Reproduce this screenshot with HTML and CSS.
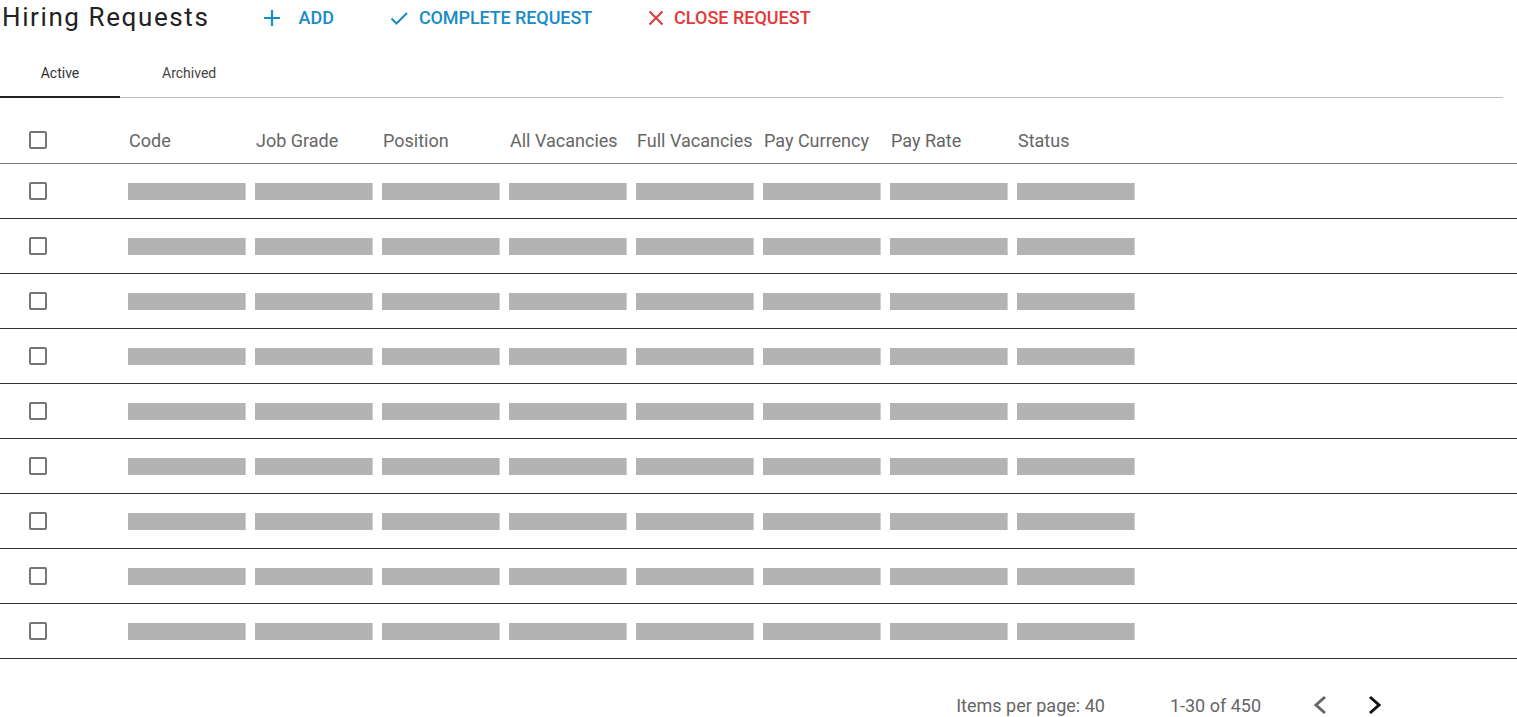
FILE: index.html
```html
<!DOCTYPE html>
<html lang="en">
<head>
<meta charset="utf-8">
<title>Hiring Requests</title>
<link rel="stylesheet" href="styles.css">
</head>
<body>
<header class="toolbar">
  <h1 class="title">Hiring Requests</h1>
  <button class="action action-blue action-add">
    <svg class="icon" width="18" height="18" viewBox="0 0 18 18"><path d="M9 1v16M1 9h16" stroke="currentColor" stroke-width="2.2" fill="none"/></svg>
    <span>ADD</span>
  </button>
  <button class="action action-blue action-complete">
    <svg class="icon" width="18" height="18" viewBox="0 0 18 18"><path d="M1.5 9.5l5 5L17 4" stroke="currentColor" stroke-width="2" fill="none"/></svg>
    <span>COMPLETE REQUEST</span>
  </button>
  <button class="action action-red">
    <svg class="icon" width="18" height="18" viewBox="0 0 18 18"><path d="M2.5 2.5l13 13M15.5 2.5l-13 13" stroke="currentColor" stroke-width="2" fill="none"/></svg>
    <span>CLOSE REQUEST</span>
  </button>
</header>

<nav class="tabs">
  <div class="tab tab-active">Active</div>
  <div class="tab">Archived</div>
</nav>

<section class="table">
  <div class="row row-head">
    <div class="cell cell-check"><span class="checkbox"></span></div>
    <div class="cell head-cell">Code</div>
    <div class="cell head-cell">Job Grade</div>
    <div class="cell head-cell">Position</div>
    <div class="cell head-cell">All Vacancies</div>
    <div class="cell head-cell">Full Vacancies</div>
    <div class="cell head-cell">Pay Currency</div>
    <div class="cell head-cell">Pay Rate</div>
    <div class="cell head-cell">Status</div>
  </div>
  <div class="row"><div class="cell cell-check"><span class="checkbox"></span></div><div class="cell"><span class="bar"></span></div><div class="cell"><span class="bar"></span></div><div class="cell"><span class="bar"></span></div><div class="cell"><span class="bar"></span></div><div class="cell"><span class="bar"></span></div><div class="cell"><span class="bar"></span></div><div class="cell"><span class="bar"></span></div><div class="cell"><span class="bar"></span></div></div>
  <div class="row"><div class="cell cell-check"><span class="checkbox"></span></div><div class="cell"><span class="bar"></span></div><div class="cell"><span class="bar"></span></div><div class="cell"><span class="bar"></span></div><div class="cell"><span class="bar"></span></div><div class="cell"><span class="bar"></span></div><div class="cell"><span class="bar"></span></div><div class="cell"><span class="bar"></span></div><div class="cell"><span class="bar"></span></div></div>
  <div class="row"><div class="cell cell-check"><span class="checkbox"></span></div><div class="cell"><span class="bar"></span></div><div class="cell"><span class="bar"></span></div><div class="cell"><span class="bar"></span></div><div class="cell"><span class="bar"></span></div><div class="cell"><span class="bar"></span></div><div class="cell"><span class="bar"></span></div><div class="cell"><span class="bar"></span></div><div class="cell"><span class="bar"></span></div></div>
  <div class="row"><div class="cell cell-check"><span class="checkbox"></span></div><div class="cell"><span class="bar"></span></div><div class="cell"><span class="bar"></span></div><div class="cell"><span class="bar"></span></div><div class="cell"><span class="bar"></span></div><div class="cell"><span class="bar"></span></div><div class="cell"><span class="bar"></span></div><div class="cell"><span class="bar"></span></div><div class="cell"><span class="bar"></span></div></div>
  <div class="row"><div class="cell cell-check"><span class="checkbox"></span></div><div class="cell"><span class="bar"></span></div><div class="cell"><span class="bar"></span></div><div class="cell"><span class="bar"></span></div><div class="cell"><span class="bar"></span></div><div class="cell"><span class="bar"></span></div><div class="cell"><span class="bar"></span></div><div class="cell"><span class="bar"></span></div><div class="cell"><span class="bar"></span></div></div>
  <div class="row"><div class="cell cell-check"><span class="checkbox"></span></div><div class="cell"><span class="bar"></span></div><div class="cell"><span class="bar"></span></div><div class="cell"><span class="bar"></span></div><div class="cell"><span class="bar"></span></div><div class="cell"><span class="bar"></span></div><div class="cell"><span class="bar"></span></div><div class="cell"><span class="bar"></span></div><div class="cell"><span class="bar"></span></div></div>
  <div class="row"><div class="cell cell-check"><span class="checkbox"></span></div><div class="cell"><span class="bar"></span></div><div class="cell"><span class="bar"></span></div><div class="cell"><span class="bar"></span></div><div class="cell"><span class="bar"></span></div><div class="cell"><span class="bar"></span></div><div class="cell"><span class="bar"></span></div><div class="cell"><span class="bar"></span></div><div class="cell"><span class="bar"></span></div></div>
  <div class="row"><div class="cell cell-check"><span class="checkbox"></span></div><div class="cell"><span class="bar"></span></div><div class="cell"><span class="bar"></span></div><div class="cell"><span class="bar"></span></div><div class="cell"><span class="bar"></span></div><div class="cell"><span class="bar"></span></div><div class="cell"><span class="bar"></span></div><div class="cell"><span class="bar"></span></div><div class="cell"><span class="bar"></span></div></div>
  <div class="row"><div class="cell cell-check"><span class="checkbox"></span></div><div class="cell"><span class="bar"></span></div><div class="cell"><span class="bar"></span></div><div class="cell"><span class="bar"></span></div><div class="cell"><span class="bar"></span></div><div class="cell"><span class="bar"></span></div><div class="cell"><span class="bar"></span></div><div class="cell"><span class="bar"></span></div><div class="cell"><span class="bar"></span></div></div>
</section>

<footer class="paginator">
  <span class="pg-label">Items per page: 40</span>
  <span class="pg-range">1-30 of 450</span>
  <div class="pg-nav">
    <svg class="chev chev-prev" width="16" height="22" viewBox="0 0 16 22"><path d="M13 3L4 11l9 8" stroke="currentColor" stroke-width="3" fill="none"/></svg>
    <svg class="chev chev-next" width="16" height="22" viewBox="0 0 16 22"><path d="M3 3l9 8L3 19" stroke="currentColor" stroke-width="3" fill="none"/></svg>
  </div>
</footer>
</body>
</html>
```

FILE: styles.css
```css
* { box-sizing: border-box; }

html, body {
  margin: 0;
  padding: 0;
  background: #fff;
  font-family: Roboto, "Liberation Sans", Arial, sans-serif;
}

.toolbar {
  display: flex;
  align-items: center;
  height: 35px;
  padding-left: 2px;
}

.title {
  margin: 0 54px 0 0;
  font-size: 26px;
  font-weight: 400;
  letter-spacing: 1.6px;
  color: #222;
  line-height: 35px;
  white-space: nowrap;
}

.action {
  display: flex;
  align-items: center;
  border: 0;
  background: none;
  padding: 0;
  font-family: inherit;
  font-size: 18px;
  font-weight: 500;
  cursor: pointer;
  white-space: nowrap;
}

.action-add { gap: 17px; margin-right: 56px; }
.action-complete { gap: 11px; margin-right: 55px; letter-spacing: -0.1px; }

.action-blue { color: #1a8cc6; }
.action-red { color: #e53838; gap: 9px; }

.icon { display: block; }

.tabs {
  display: flex;
  margin-top: 16px;
  margin-right: 14px;
  border-bottom: 1px solid #bdbdbd;
}

.tab {
  padding: 0 40px 0 42px;
  height: 46px;
  line-height: 44px;
  font-size: 14px;
  color: #444;
  text-align: center;
}

.tab-active {
  width: 120px;
  padding: 0;
  color: #333;
  border-bottom: 2px solid #222;
  margin-bottom: -1px;
  height: 47px;
}

.table {
  margin-top: 19px;
}

.row {
  display: grid;
  grid-template-columns: 128px repeat(8, 127px) 1fr;
  align-items: center;
  height: 55px;
  border-bottom: 1px solid #333;
}

.row-head {
  height: 47px;
  border-bottom: 1px solid #777;
  font-size: 18px;
  color: #666;
}

.head-cell { padding-left: 1px; }

.cell-check {
  display: flex;
  padding-left: 29px;
}

.checkbox {
  display: block;
  width: 18px;
  height: 18px;
  border: 2px solid #767676;
  border-radius: 2px;
}

.bar {
  display: block;
  width: 118px;
  height: 17px;
  background: #b3b3b3;
  border-right: 1px solid #d0d0d0;
}

.paginator {
  display: flex;
  align-items: center;
  justify-content: flex-end;
  height: 92px;
  padding-right: 134px;
  font-size: 18px;
  color: #666;
}

.pg-range { margin-left: 65px; }

.pg-nav {
  display: flex;
  align-items: center;
  gap: 39px;
  margin-left: 51px;
}

.chev { display: block; }
.chev-prev { color: #666; }
.chev-next { color: #111; }
```
